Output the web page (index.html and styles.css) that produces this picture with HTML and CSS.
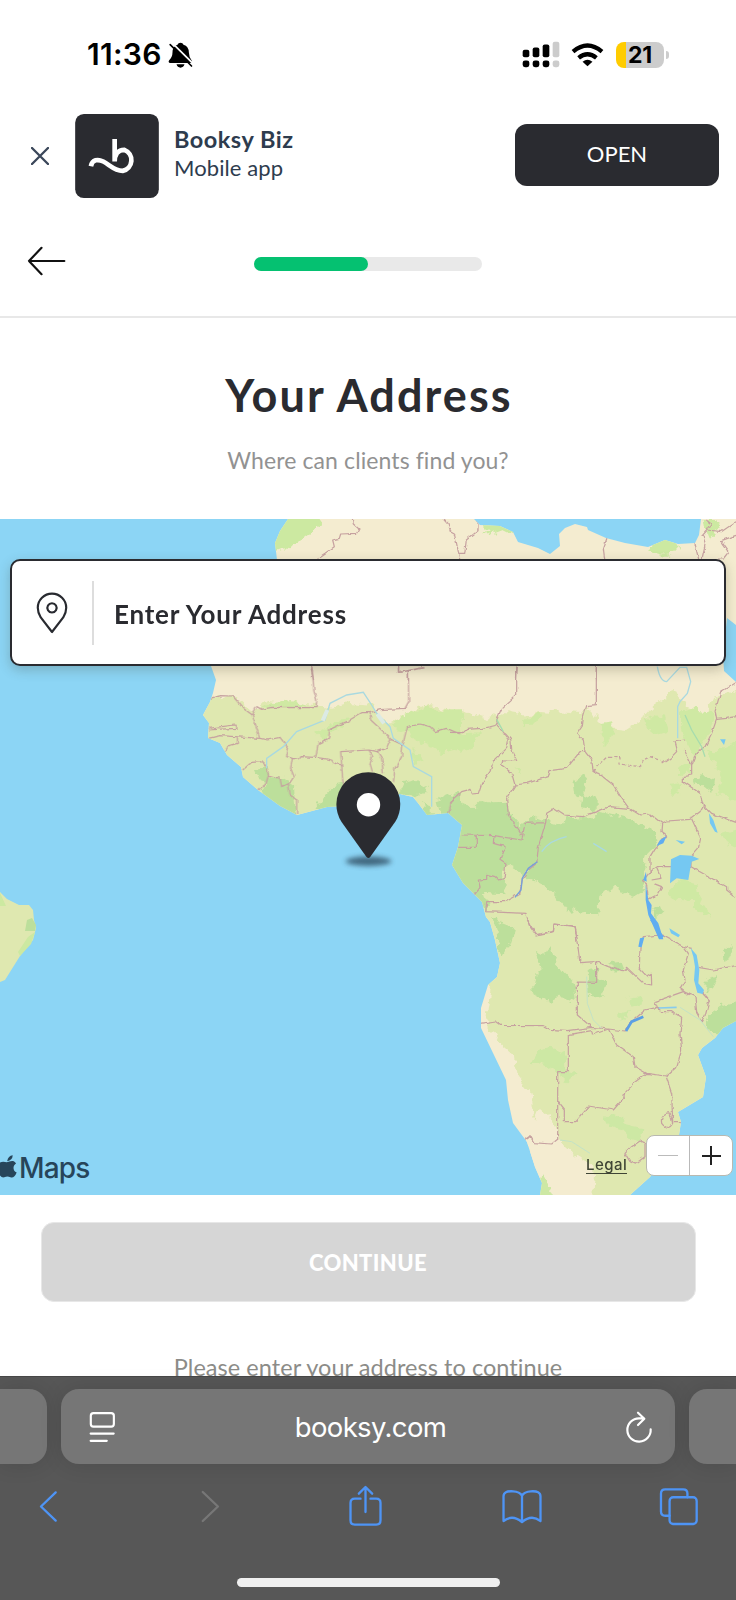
FILE: index.html
```html
<!DOCTYPE html>
<html lang="en">
<head>
<meta charset="utf-8">
<title>Your Address</title>
<link rel="stylesheet" href="styles.css">
</head>
<body>
<div class="screen">
  <header class="status">
    <div class="status-time"><span class="clock">11:36</span>
      <svg class="bell" viewBox="500 125 80 78"><path d="M508 188Q502 186 506 180Q516 170 516 156Q516 138 531 133Q533 127 540 127Q547 127 549 133Q565 138 565 156Q565 170 574 181Q577 188 570 188ZM528 192H552Q549 202 540 202Q531 202 528 192Z"/><path d="M514 127L580 192" stroke="#fff" stroke-width="5"/><path d="M509 133L573 197" stroke="#000" stroke-width="5" stroke-linecap="round"/></svg>
    </div>
    <div class="status-icons">
      <svg class="signal" viewBox="460 122 114 80"><g><rect x="462" y="148" width="20" height="22" rx="6"/><rect x="492" y="141" width="20" height="29" rx="6"/><rect x="522" y="132" width="20" height="38" rx="6"/><rect x="462" y="180" width="20" height="20" rx="7"/><rect x="492" y="180" width="20" height="20" rx="7"/><rect x="522" y="180" width="20" height="20" rx="7"/></g><g fill="#ccc"><rect x="552" y="124" width="20" height="46" rx="6"/><rect x="552" y="180" width="20" height="20" rx="7"/></g></svg>
      <svg class="wifi" viewBox="608 122 100 76"><path d="M614 151Q658 114 702 151M631 170Q658 148 685 170" fill="none" stroke="#000" stroke-width="13"/><path d="M658 196L643 182Q658 170 673 182Z"/></svg>
      <div class="battery"><span class="level">21</span></div><i class="nub"></i>
    </div>
  </header>

  <section class="banner">
    <svg class="close" viewBox="94 440 54 54"><path d="M97 443L145 491M145 443L97 491" fill="none" stroke="#3b475a" stroke-width="7" stroke-linecap="round"/></svg>
    <svg class="app-icon" viewBox="225 342 250 251"><rect x="225" y="342" width="250" height="251" rx="26" fill="#2a2b30"/><path d="M272 498C276 478 293 476 309 484C328 494 342 512 367 512A33 33 0 0 0 372 449C353 449 343 462 343 484V417" fill="none" stroke="#fff" stroke-width="14"/></svg>
    <div class="app-name"><strong>Booksy Biz</strong><span>Mobile app</span></div>
    <button class="open">OPEN</button>
  </section>

  <nav class="steps">
    <svg class="back" viewBox="82 736 118 90"><path d="M195 781H88M126 741L88 781L126 821" fill="none" stroke="#111" stroke-width="6.500" stroke-linecap="round" stroke-linejoin="round"/></svg>
    <div class="progress"><div class="progress-fill"></div></div>
  </nav>

  <div class="heading"><h1>Your Address</h1><p>Where can clients find you?</p></div>

  <section class="map">
    <svg class="map-art" viewBox="0 519 736 676" preserveAspectRatio="none">
      <defs>
        <filter id="rough" filterUnits="userSpaceOnUse" x="0" y="519" width="736" height="676"><feTurbulence type="fractalNoise" baseFrequency="0.11" numOctaves="3" seed="4"/><feDisplacementMap in="SourceGraphic" scale="11" xChannelSelector="R" yChannelSelector="G"/></filter>
        <filter id="wavy" filterUnits="userSpaceOnUse" x="0" y="519" width="736" height="676"><feTurbulence type="fractalNoise" baseFrequency="0.15" numOctaves="2" seed="9"/><feDisplacementMap in="SourceGraphic" scale="4" xChannelSelector="R" yChannelSelector="G"/></filter>
        <clipPath id="land"><path id="coast" d="M288 519L280 531L275 543L277 560L230 640L211 666L216 680L213 693L210 702L203 715L209 723L208 738L220 743L227 755L241 767L243 777L258 790L280 806L297 815L327 807L345 806L370 800L400 794L413 797L418 803L427 815L448 813L456 820L462 825L458 847L452 865L463 883L482 902L486 917L490 922L495 940L500 963L497 977L488 985L481 1008L481 1028L493 1053L506 1080L508 1100L513 1123L527 1142L535 1167L542 1183L540 1195H630L650 1177L679 1135L681 1122L678 1112L703 1097L706 1077L698 1055L702 1048L715 1038L723 1028L736 1021V682L724 671L723 655L727 618L736 625V519H701L699 535L695 543L678 544L665 540L648 547L625 543L606 538L588 530L587 527L575 524L565 528L559 534L560 546L550 554L538 548L518 542L513 532L500 526L480 525L474 519Z"/></clipPath>
      </defs>
      <rect y="519" width="736" height="676" fill="#8cd5f5"/>
      <use href="#coast" fill="#f4ecd0"/>
      <path d="M0 892L7 899L19 905L29 905L33 910L34 920L36 928L33 940L20 956L10 972L5 980L0 982Z" fill="#dfe8b0"/>
      <path d="M32 918L27 920L25 931L35 931L36 925Z" fill="#bcdf9b"/>
      <path d="M35 932L31 944L20 956L18 952L28 937ZM0 893L6 906L0 906Z" fill="#cce9a1"/>
      <g clip-path="url(#land)">
        <g filter="url(#rough)">
        <path fill="#dfe8b0" d="M185 700L211 697L233 695L253 712L265 701L290 703L316 705L325 709L350 702L370 704L388 724L411 712L423 706L435 708L460 710L488 718L504 711L529 715L542 710L580 713L586 706L608 728L625 730L645 717L652 709L665 699L672 690L678 693L684 708L708 712L713 698L750 685V1205H592L595 1174L566 1148L558 1139L555 1123L539 1109L534 1120L530 1092L518 1078L515 1056L497 1040L486 1023L491 985L478 970L440 840L180 830Z"/>
        <g transform="translate(0 340) scale(.33333)"><path fill="#cce9a1" d="M850 520H970L960 555L945 565L930 580L905 600L880 612L880 628L850 625L810 640L815 580Z"/></g>
        <g transform="translate(368 340) scale(.33333)" fill="#cce9a1"><path d="M320 530L370 553H405L440 572L435 585L405 570L365 585L342 587L365 575ZM840 625L865 595L910 590L930 620L915 637L890 645L860 636ZM1010 537H1045L1055 560L1025 595L1015 570Z"/></g>
        <g transform="translate(180 660) scale(.33333)">
          <path fill="#cfe9a3" d="M680 160L720 150L733 137L750 150L840 148V270L790 280L760 260L700 235L685 210L650 212L635 195ZM700 270L725 300L705 310ZM270 128L330 120L380 135L350 142H240ZM405 215L435 208L460 180L520 175L450 225L430 238Z"/>
          <path fill="#bcdf9b" d="M222 330L260 325L270 345L300 347L345 375L350 475L300 450L250 410L245 390L262 365L235 360ZM400 450L460 375L495 368L500 450ZM665 370L710 360L740 378L735 400L710 412L660 395ZM725 430L755 440V475H735ZM785 430L840 405V480L810 470Z"/>
        </g>
        <g transform="translate(450 660) scale(.33333)">
          <path fill="#cfe9a3" d="M0 145L35 160L45 175L20 190L0 200ZM0 225L90 220L75 260L30 275L0 270ZM215 195L240 170L275 153L280 170L255 190ZM455 190L490 183V220L470 260L455 245ZM585 175L615 165L645 170L655 215L620 225L590 200ZM690 155L720 148L790 155L800 170L770 230L735 290L700 230L690 190ZM760 265L790 280L870 245V430L800 400L820 360L795 310ZM655 375L690 370L690 395L665 405ZM690 320L720 305L725 340L690 345ZM655 690L690 660L740 670L745 705L785 770L740 760L725 720L665 715ZM190 315L220 330L215 345ZM810 520L870 500V570L820 545Z"/>
          <path fill="#bcdf9b" d="M0 405L20 402L35 430L70 445L95 420L130 430L170 428L180 465L215 505L225 490L250 470L290 485L400 470L455 455L530 475L590 505L620 520L628 550L595 575L580 620L585 690L550 710L515 700L500 680L448 705L445 762H410L380 750L370 740L360 760L320 710L300 685L230 650L235 630L215 640L190 620L165 610L160 700L105 695L115 755L80 740L-20 640L-20 500L-40 420ZM370 360L400 345L415 365L400 400L440 420V450L395 445L400 410L375 395ZM730 365L765 345L795 360L790 395L760 385ZM610 740L630 735L640 760L620 778ZM130 770L150 785L190 800L180 840H140Z"/>
          <path fill="#dfe8b0" d="M290 480L325 465L350 470L340 490H320ZM390 475L430 455L445 460L430 475Z"/>
        </g>
        <g transform="translate(450 920) scale(.33333)">
          <path fill="#bcdf9b" d="M140 0L190 35L175 80L160 107L145 90L150 55ZM258 95L280 105L300 78L318 130L375 195L380 240L330 230L300 245L240 210L255 195L260 160L275 145ZM410 145L440 140L445 170L470 190L460 230L430 235L412 215ZM475 130L515 125L525 150L490 155ZM818 95L845 75V105L820 120ZM770 180L803 168L780 210L768 215ZM765 310L775 285L820 255L870 245V315L820 345L765 328Z"/>
          <path fill="#cde8a4" d="M240 432L265 395L300 383L345 395L350 452L380 460L345 490L330 460L300 440L255 428ZM465 590L485 580L520 595L520 612L580 625L575 665L540 655L515 630L480 620ZM530 240L560 232L580 250L545 260ZM505 285L540 275L530 295L505 305Z"/>
          <path fill="#f4ecd0" d="M225 655L325 658L345 690L430 740V835H290L240 740Z"/>
          <path fill="#cde8a4" d="M275 765L300 785L300 810L320 835H255Z"/>
        </g>
        </g>
        <g filter="url(#wavy)" fill="none" stroke="#c6a1a0" stroke-width="3.700" stroke-linejoin="round">
          <path transform="translate(0 340) scale(.33333)" d="M1056 530L1060 552L1077 567L1070 580L1022 582L1018 595L998 600L1003 620L975 640L950 657M932 978L941 1020"/>
          <path transform="translate(368 340) scale(.33333)" d="M222 530L240 550L247 575L260 583L272 640L290 640L295 600L330 572V535M272 640L275 657M717 594L706 625L710 657M980 610L992 657M1005 590L1012 610L1002 657M1104 545L1060 575L1018 570M1104 586L1060 602L1083 634L1065 657L1045 657M92 978V997L170 984M121 992V1020M448 978L445 1020M685 978V1020M1015 540L1030 552L1018 570L1000 590"/>
          <g transform="translate(180 660) scale(.33333)"><path d="M90 115L120 107L158 108L190 145L217 165L240 235L262 240L300 232L325 265L320 290L337 295L355 297L360 290L407 292L415 250L445 235L450 208L500 185L545 158L570 158L572 180L610 215L633 238L620 265L592 275L567 270L482 275L485 315L460 308L455 300L430 295L407 292M217 165L230 140L245 148L275 142L408 143L410 120L402 95L396 20M85 205L125 200L165 195L168 205L110 208L87 210M85 235L120 227L240 235M172 228V250L145 258L135 275M188 330L215 307L245 305L260 320L265 345L258 372L235 390M265 345L300 355L305 380L325 370L330 405L350 420V465M337 295L332 325L342 350L328 370M485 315L488 360L495 390M567 270L578 290L570 310L577 335M592 275L605 295L610 340M633 238L668 255L665 290L645 325L640 365M668 255L682 200L720 192L750 200L765 215L800 205L840 222M655 20V37L732 22M685 30L686 125L675 145L600 149L570 158M840 405L815 425L805 460"/></g>
          <g transform="translate(450 660) scale(.33333)"><path d="M0 217L40 218L50 208L100 205L142 195L140 180L155 145L200 104V20M142 195L175 240L170 265L130 305L120 335L95 370L85 400L65 402L60 388L35 395L0 430M165 220L183 240L185 270L200 302L158 303L155 315L185 340L195 375L170 415L175 465L195 495L215 525M195 375L230 370L295 350L300 332L350 325L390 275H405L400 240L380 220L397 195L400 170L410 137L439 134V20M405 275L425 300L430 335L445 340L490 375L515 415L537 445L480 440L425 460L395 470L345 465L315 445L290 460L287 488L225 490L215 540L130 527L35 525M79 525V562H25M132 525L130 550L165 560L150 598L168 610L162 655L145 660L135 650L110 643V658L85 660L90 680L70 705M287 488L265 560L260 610L235 630L217 655L210 700L165 725L110 725L107 755L228 760L240 800L258 825L310 815L312 792L375 798L382 840M537 445L570 465L600 462L635 490L650 483L720 478L750 455L760 435L750 400L700 365V350L725 345V315L703 270M705 240L672 245L680 275L660 295L635 312M725 315L740 275L765 260L785 220L800 178L795 155L812 95L858 68M800 178L830 175L858 170M760 435L785 460L858 487M722 470L752 535L745 565L723 590V620H622L600 635L578 665L590 675L595 718L620 705L635 680L610 670M723 620L830 680V690L858 712M635 490L633 515L650 528L615 565L600 590V635M620 625L633 655L605 660"/><path stroke-dasharray="10 6" d="M428 335L450 310L470 292L510 293V312L570 320L580 300L600 290L635 303"/></g>
          <g transform="translate(450 920) scale(.33333)"><path d="M232 0L258 44L310 34L312 12L375 20L390 128L440 125V187L382 186V285L425 322L475 327L525 333L540 310L585 270L622 262L615 245L700 215L735 230L740 275L757 305L765 290L778 240L740 195M440 125L475 140L520 155L530 142L580 190L605 195L604 160L590 168L568 145L570 80L580 50L635 45L700 80L725 85M700 80L715 100L700 150L705 180L690 205L715 225M745 142L790 150L858 137M90 310L137 303L155 316L280 317L300 328L355 332L425 322L475 327M475 327L500 375L550 410L555 440L590 460L648 468L665 520L668 605H694M590 460L550 490L525 515L520 535L490 570L415 558L375 605H343V570L323 545M323 660V455H355V344L425 332L428 345L475 327M622 262L635 275L665 275L695 295L690 340L695 390L680 440L648 468M660 578Q630 580 635 610Q655 635 668 610ZM222 660L240 647L252 668L305 672L323 658M525 700L545 680L570 663L585 670V710L555 732L540 725Z"/></g>
        </g>
        <g fill="none" stroke="#a9d9e0" stroke-width="4">
          <path transform="translate(180 660) scale(.33333)" d="M260 325V295L310 260L350 215L435 180L450 130L500 105L550 97L575 135L590 160L630 200L640 235L690 270L700 320L755 350V440"/>
          <path transform="translate(180 660) scale(.33333)" d="M428 182L442 150M592 162L612 190" stroke="#dceae4" stroke-width="12"/>
          <path transform="translate(450 660) scale(.33333)" d="M622 20Q630 65 650 65L690 22H710L722 65L712 100L690 125L683 140V235M275 575Q300 540 350 530M430 550L470 575"/>
          <path transform="translate(450 660) scale(.33333)" d="M705 165L725 210L755 260L765 290M140 178L160 215" stroke="#a6dcae"/>
          <path transform="translate(450 920) scale(.33333)" stroke="#c3e2c6" stroke-width="3" d="M410 170L412 250L430 300L455 325M690 262L750 300L790 350M330 660L365 665L420 700"/>
          <path transform="translate(450 920) scale(.33333)" stroke="#87cbed" stroke-width="5" d="M626 264L680 262"/>
        </g>
        <g fill="#75c8f2">
          <g transform="translate(450 660) scale(.33333)"><path d="M663 598L690 585L725 587L748 597L725 605L720 630L715 660L680 655L660 670ZM777 460L790 480L803 518L795 515L780 490ZM677 540L705 545L695 553ZM810 238H827L822 255ZM658 805L690 825L685 832L663 820Z"/><path fill="#60adf1" d="M650 528L640 550L620 558L630 540ZM588 635L580 660L590 665ZM587 672L595 720L605 735L603 760L625 790L640 838H627L595 765L587 720Z"/><path fill="none" stroke="#749edb" stroke-width="4" d="M262 605L235 625L217 655L213 690L195 712"/></g>
          <g transform="translate(450 920) scale(.33333)"><path fill="#60adf1" d="M600 0H615L627 30L642 50L632 55L615 20ZM565 80L570 55L583 52L575 82Z"/><path d="M722 84L740 105L748 150L745 190L762 210L758 222L742 218L732 180L735 140L730 110Z"/><path d="M528 333L545 305L580 290" fill="none" stroke="#5b9fe5" stroke-width="8"/></g>
        </g>
      </g>
    </svg>

    <div class="address-card">
      <svg class="pin-line" viewBox="105 752 102 130"><path d="M156 876L122 832Q113 818 113 803A43 43 0 0 1 199 803Q199 818 190 832ZM156 789A14 14 0 1 1 155.900 789Z" fill="none" stroke="#282a30" stroke-width="6.500" stroke-linejoin="round"/></svg>
      <div class="address-input">Enter Your Address</div>
    </div>

    <svg class="marker" viewBox="468 330 194 296"><defs><filter id="soft" x="-30%" y="-80%" width="160%" height="260%"><feGaussianBlur stdDeviation="8"/></filter></defs><ellipse cx="565" cy="603" rx="68" ry="14" fill="#35556a" opacity=".85" filter="url(#soft)"/><path d="M559 590L484 485Q469 462 469 432A95.500 95.500 0 0 1 660 432Q660 462 645 485L570 590Q565 596 559 590Z" fill="#2a2b30"/><circle cx="565" cy="434" r="35" fill="#fff"/></svg>

    <div class="maps-logo"><svg class="apple" viewBox="-12 48 64 70"><path d="M22 67Q25 50 39 49Q38 65 22 67ZM20 70C29 70 40 60 49 74C38 81 39 96 51 101C46 113 40 119 32 116C23 112 20 114 13 116C1 119 -10 98 -8 84C-6 66 12 68 20 70Z" fill="#27455a"/></svg><span>Maps</span></div>
    <a class="legal">Legal</a>
    <div class="zoom-control"><span class="minus"></span><span class="plus"></span></div>
  </section>

  <section class="actions"><button class="continue">CONTINUE</button><p>Please enter your address to continue</p></section>

  <footer class="browser">
    <div class="tabs">
      <div class="tab-edge left"></div>
      <div class="url-bar">
        <svg class="reader" viewBox="267 153 82 96"><rect x="272.500" y="159" width="70" height="41" rx="8"/><path d="M272 221H342M272 243H321"/></svg>
        <span>booksy.com</span>
        <svg class="reload" viewBox="770 148 84 96"><path d="M847 203A35 35 0 1 1 812 170H827M809 153L828 171L809 190"/></svg>
      </div>
      <div class="tab-edge right"></div>
    </div>
    <div class="toolbar">
      <svg class="t-back" viewBox="117 389 58 98"><path d="M168 395L123 438L168 481"/></svg>
      <svg class="t-next" viewBox="602 389 56 98"><path d="M607 395L652 438L607 481"/></svg>
      <svg class="t-share" viewBox="1043 372 104 126"><path d="M1080 413H1063Q1050 413 1050 426V478Q1050 491 1063 491H1127Q1140 491 1140 478V426Q1140 413 1127 413H1110M1095 453V379M1075 398L1095 378L1115 398"/></svg>
      <svg class="t-book" viewBox="399 385 126 106"><path d="M462 405Q455 393 435 392Q406 390 406 407V482Q433 461 462 485Q491 461 518 482V407Q518 390 489 392Q469 393 462 405V485"/></svg>
      <svg class="t-tabs" viewBox="873 380 118 116"><rect x="905" y="410" width="82" height="81" rx="11"/><path d="M905 466H892Q879 466 879 453V399Q879 386 892 386H946Q959 386 959 399V410"/></svg>
    </div>
    <div class="home"></div>
  </footer>
</div>
</body>
</html>
```

FILE: styles.css
```css
* { box-sizing: border-box; }
body { margin: 0; background: #fff; }
svg { display: block; flex: none; }
h1, p { margin: 0; }
button { border: 0; padding: 0; font: inherit; }

.screen { width: 736px; height: 1600px; display: flex; flex-direction: column; overflow: hidden; font-family: Lato, "Open Sans", sans-serif; font-variant-ligatures: none; color: #2a2b30; white-space: nowrap; }

.status { height: 108px; flex: none; display: flex; justify-content: space-between; padding: 41px 67px 0 87px; font-family: Inter, sans-serif; color: #000; }
.status-time { display: flex; height: 27px; align-items: center; }
.clock { width: 80px; font-size: 30px; font-weight: 600; letter-spacing: 0.3px; line-height: 27px; }
.bell { width: 27px; height: 26px; }
.status-icons { display: flex; height: 27px; align-items: center; }
.signal { width: 38px; height: 27px; margin-right: 11px; }
.wifi { width: 33px; height: 25px; margin-right: 12px; }
.battery { width: 48px; height: 26px; border-radius: 8px; background: linear-gradient(90deg, #ffcc00 10px, #ccc 10px); display: flex; align-items: center; justify-content: center; }
.level { font-size: 23px; font-weight: 700; letter-spacing: -0.2px; }
.nub { width: 3px; height: 8px; margin-left: 2px; border-radius: 0 4px 4px 0; background: #ccc; }

.banner { height: 96px; flex: none; display: flex; align-items: flex-start; padding: 6px 17px 0 31px; }
.close { width: 18px; height: 18px; margin: 33px 26px 0 0; }
.app-icon { width: 84px; height: 84px; margin-right: 15px; }
.app-name { display: flex; flex-direction: column; padding-top: 10px; flex: 1; color: #2e3c4e; }
.app-name strong { font-size: 23.5px; font-weight: 700; line-height: 30px; letter-spacing: 0.5px; }
.app-name span { font-size: 22px; line-height: 28px; letter-spacing: 0.1px; }
.open { width: 204px; height: 62px; margin-top: 10px; padding-bottom: 4px; border-radius: 12px; background: #2a2b30; color: #fff; font-size: 22px; }

.steps { height: 114px; flex: none; display: flex; padding: 41px 27px; border-bottom: 2px solid #e8e8e8; }
.back { width: 39px; height: 30px; margin: 1px 188px 0 0; }
.progress { width: 228px; height: 14px; margin-top: 12px; border-radius: 7px; background: #e9e9e9; }
.progress-fill { width: 50%; height: 14px; border-radius: 7px; background: #05c171; }

.heading { height: 201px; flex: none; padding-top: 50px; text-align: center; }
.heading h1 { font-size: 45px; line-height: 54px; font-weight: 700; letter-spacing: 2.1px; text-indent: 2px; }
.heading p { margin-top: 22px; font-size: 23px; line-height: 32px; color: #929292; letter-spacing: 0.1px; }

.map { position: relative; height: 676px; flex: none; padding: 40px 10px 0; }
.map-art { position: absolute; inset: 0; width: 736px; height: 676px; }
.address-card { position: relative; display: flex; align-items: center; height: 107px; padding-left: 23px; border: 2px solid #2a2b30; border-radius: 10px; background: #fff; box-shadow: 0 4px 12px rgba(60, 60, 40, 0.25); }
.pin-line { width: 34px; height: 43px; margin-right: 23px; }
.address-input { height: 64px; padding: 1px 0 0 20px; border-left: 2px solid #ddd; font-size: 26px; line-height: 64px; font-weight: 700; letter-spacing: 0.8px; }
.marker { position: absolute; left: 336px; top: 251px; width: 65px; height: 99px; overflow: visible; }
.maps-logo { position: absolute; left: -4px; top: 632px; display: flex; font: 500 28px/34px Inter, sans-serif; letter-spacing: -0.8px; color: #27455a; }
.apple { width: 21px; height: 23px; margin: 4px 2px 0 0; }
.legal { position: absolute; left: 586px; top: 637px; font: 500 15px/17px Inter, sans-serif; letter-spacing: 0.5px; color: #3f4535; border-bottom: 1px solid #3f4535; }
.zoom-control { position: absolute; left: 646px; top: 616px; width: 87px; height: 41px; display: flex; border: 1.5px solid #b9b9b0; border-radius: 8px; background: #fff; }
.minus, .plus { flex: 1; background: linear-gradient(#bbb, #bbb) center / 20px 1px no-repeat; }
.plus { border-left: 1px solid #b9b9b9; background: linear-gradient(#222, #222) center / 19px 2px no-repeat, linear-gradient(#222, #222) center / 2px 19px no-repeat; }

.actions { height: 181px; flex: none; display: flex; flex-direction: column; align-items: center; padding-top: 27px; }
.continue { width: 655px; height: 80px; flex: none; border: 1px solid #e7e7e7; border-radius: 13px; background: #d6d6d6; color: #fff; font-size: 22px; font-weight: 900; letter-spacing: 0.4px; }
.actions p { margin-top: 49px; font-size: 23.5px; line-height: 32px; color: #8c8c88; letter-spacing: 0.05px; }

.browser { position: relative; height: 224px; flex: none; background: #575757; border-top: 1px solid #474747; }
.tabs { display: flex; justify-content: space-between; padding-top: 12px; }
.tab-edge { width: 47px; height: 75px; background: #767676; box-shadow: 0 0 22px rgba(0, 0, 0, 0.12); }
.left { border-radius: 0 18px 18px 0; }
.right { border-radius: 18px 0 0 18px; }
.url-bar { width: 614px; height: 75px; display: flex; align-items: center; justify-content: space-between; padding: 0 22px 0 28px; border-radius: 18px; background: #767676; box-shadow: 0 0 22px rgba(0, 0, 0, 0.12); color: #fff; font: 400 27.5px/36px Inter, sans-serif; letter-spacing: -0.65px; }
.url-bar svg { fill: none; stroke: #fff; stroke-width: 6.5; stroke-linecap: round; stroke-linejoin: round; }
.reader { width: 27px; height: 32px; }
.reload { width: 28px; height: 32px; }
.toolbar { display: flex; align-items: center; height: 44px; margin-top: 20px; padding-left: 39px; }
.toolbar svg { fill: none; stroke: #4e94f5; stroke-width: 7; stroke-linecap: round; stroke-linejoin: round; }
.t-back { width: 19px; height: 33px; margin-right: 143px; }
.toolbar .t-next { width: 19px; height: 33px; margin-right: 128px; stroke: #777; }
.t-share { width: 35px; height: 42px; margin-right: 118px; }
.t-book { width: 42px; height: 35px; margin-right: 116px; }
.t-tabs { width: 39px; height: 39px; }
.home { width: 263px; height: 9px; margin: 50px 0 0 237px; border-radius: 5px; background: #f0f0f0; }
```
